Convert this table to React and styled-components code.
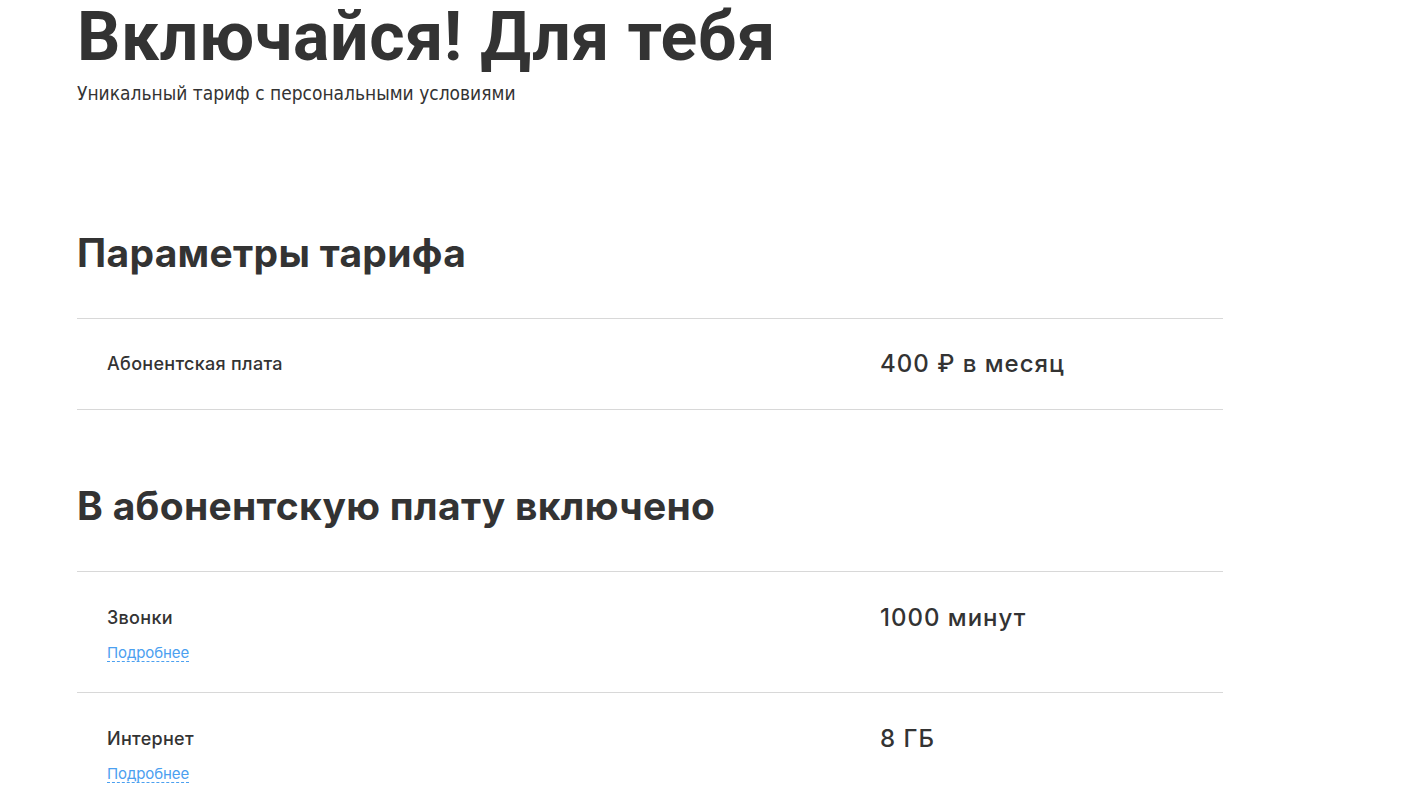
import styled, { createGlobalStyle } from 'styled-components';

const Global = createGlobalStyle`
  body {
    margin: 0;
    background: #fff;
    color: #333;
    font-family: Inter, "Noto Sans", sans-serif;
  }
`;

const Page = styled.div`
  width: 1146px;
  margin-left: 77px;
`;

const Title = styled.h1`
  margin: 0;
  padding-top: 1px;
  font-family: Roboto, "Liberation Sans", sans-serif;
  font-weight: 700;
  font-size: 68px;
  line-height: 72px;
  letter-spacing: 0.6px;
  color: #333;
`;

const Subtitle = styled.p`
  margin: 9px 0 0;
  font-family: "DejaVu Sans Condensed", "Liberation Sans", sans-serif;
  font-size: 19px;
  line-height: 22px;
  color: #333;
`;

const Section = styled.section`
  margin-top: ${(p) => p.gap}px;
`;

const Heading = styled.h2`
  margin: 0 0 43px;
  font-family: Inter, sans-serif;
  font-weight: 700;
  font-size: 39px;
  line-height: 44px;
  letter-spacing: 0.3px;
  color: #333;
`;

const Table = styled.div`
  border-top: 1px solid #d8d8d8;
`;

const Row = styled.div`
  display: grid;
  grid-template-columns: 773px 1fr;
  padding: 0 30px;
  height: ${(p) => p.h}px;
  border-bottom: 1px solid #d8d8d8;
  box-sizing: border-box;
  align-items: ${(p) => (p.top ? 'start' : 'center')};
  padding-top: ${(p) => (p.top ? 35 : 0)}px;
`;

const Label = styled.div`
  display: flex;
  flex-direction: column;
  align-items: flex-start;
  gap: 15px;
  font-family: Inter, sans-serif;
  font-size: 18px;
  font-weight: 500;
  line-height: 22px;
  letter-spacing: 0.3px;
  color: #333;
`;

const More = styled.a`
  font-size: 15px;
  font-weight: 400;
  line-height: 17px;
  letter-spacing: -0.1px;
  color: #4ba0f0;
  text-decoration: none;
  border-bottom: 1px dashed #4ba0f0;
  cursor: pointer;
`;

const Value = styled.div`
  font-family: Inter, sans-serif;
  font-size: 24px;
  font-weight: 500;
  line-height: 22px;
  letter-spacing: 1px;
  color: #333;
`;

const App = () => (
  <>
    <Global />
    <Page>
      <Title>Включайся! Для тебя</Title>
      <Subtitle>Уникальный тариф с персональными условиями</Subtitle>
      <Section gap={127}>
        <Heading>Параметры тарифа</Heading>
        <Table>
          <Row h={91}>
            <Label>Абонентская плата</Label>
            <Value>400 ₽ в месяц</Value>
          </Row>
        </Table>
      </Section>
      <Section gap={74}>
        <Heading>В абонентскую плату включено</Heading>
        <Table>
          <Row h={121} top>
            <Label>
              Звонки
              <More>Подробнее</More>
            </Label>
            <Value>1000 минут</Value>
          </Row>
          <Row h={121} top>
            <Label>
              Интернет
              <More>Подробнее</More>
            </Label>
            <Value>8 ГБ</Value>
          </Row>
        </Table>
      </Section>
    </Page>
  </>
);

export default App;
